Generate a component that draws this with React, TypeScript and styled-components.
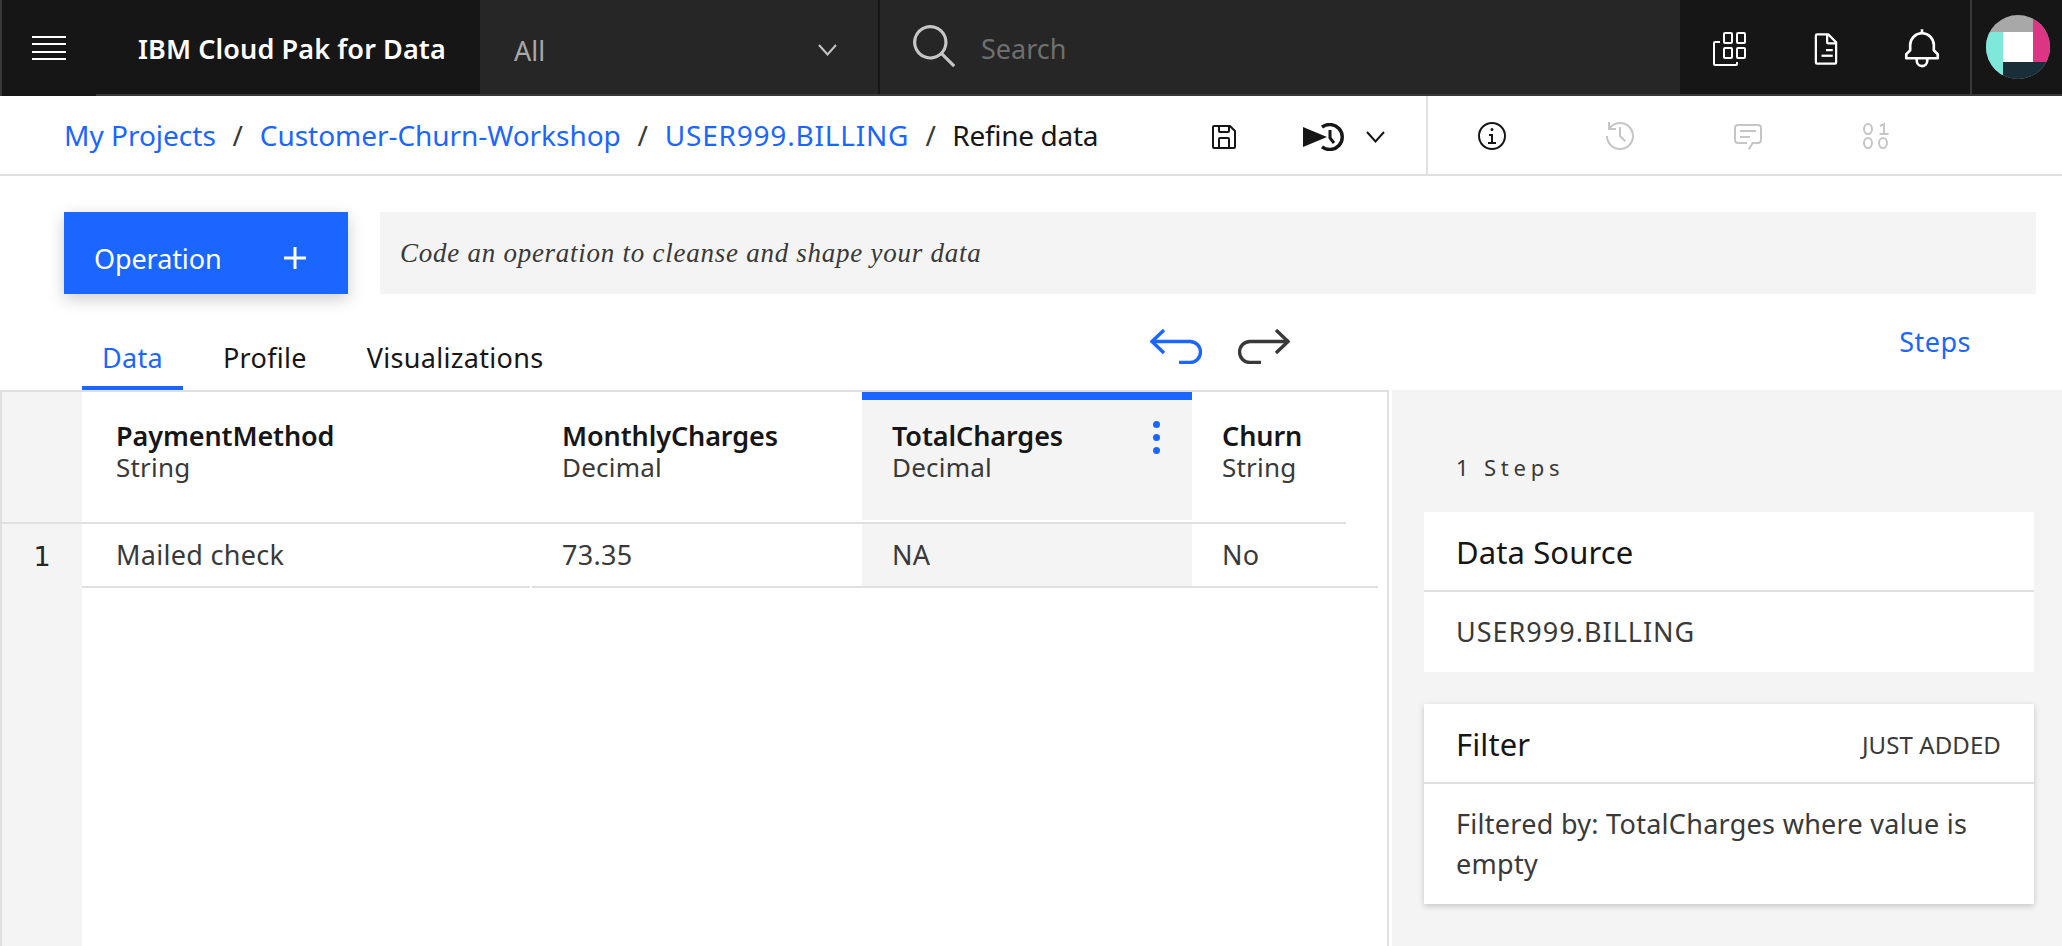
import React from "react";
import styled, { createGlobalStyle } from "styled-components";

const BLUE = "#1a66ff";
const LINE = "#e0e0e0";
const FONT = `"Noto Sans", "Liberation Sans", sans-serif`;

const GlobalStyle = createGlobalStyle`
  html, body {
    margin: 0;
    padding: 0;
    height: 100%;
    overflow: hidden;
    background: #fff;
    font-family: ${FONT};
  }
  * {
    box-sizing: border-box;
  }
  svg {
    display: block;
    flex: none;
  }
`;

const Page = styled.div`
  width: 2062px;
  height: 946px;
  display: flex;
  flex-direction: column;
  overflow: hidden;
`;

/* top dark header */
const Header = styled.header`
  height: 96px;
  display: flex;
  background: #161616;
  border-bottom: 2px solid #393939;
  border-left: 2px solid #393939;
  color: #fff;
`;

const MenuCell = styled.div`
  width: 94px;
  margin-bottom: -2px;
  background: #161616;
  display: flex;
  align-items: center;
  padding-left: 30px;
`;

const Brand = styled.div`
  width: 384px;
  display: flex;
  align-items: center;
  padding: 2px 0 0 42px;
  font-size: 27px;
  font-weight: 600;
  letter-spacing: 0.1px;
  white-space: nowrap;
`;

const Scope = styled.div`
  width: 400px;
  background: #262626;
  border-right: 2px solid #161616;
  display: flex;
  align-items: center;
  justify-content: space-between;
  padding: 6px 41px 0 34px;
  color: #a8a8a8;
  font-size: 27px;
`;

const SearchBox = styled.div`
  flex: 1;
  background: #262626;
  display: flex;
  align-items: center;
  gap: 21px;
  padding-left: 30px;
  color: #6f6f6f;
  font-size: 27px;
`;

const SearchLabel = styled.span`
  padding-top: 2px;
`;

const HeaderActions = styled.div`
  width: 382px;
  padding-left: 2px;
  display: flex;
`;

const HeaderIcon = styled.div`
  width: 96px;
  display: flex;
  align-items: center;
  justify-content: center;
  padding-top: 4px;
`;

const AvatarCell = styled.div`
  flex: 1;
  border-left: 2px solid #393939;
  display: flex;
  align-items: center;
  padding-left: 14px;
`;

/* breadcrumb bar */
const CrumbBar = styled.div`
  height: 80px;
  display: flex;
  border-bottom: 2px solid ${LINE};
  padding: 0 122px 0 64px;
`;

const Crumbs = styled.nav`
  flex: 1;
  display: flex;
  align-items: center;
  font-size: 28px;
  color: #161616;
`;

const CrumbLink = styled.a<{ $tracking?: number }>`
  color: ${BLUE};
  text-decoration: none;
  letter-spacing: ${(p) => p.$tracking ?? 0}px;
`;

const CrumbSlash = styled.span`
  width: ${(p: { $w: number }) => p.$w}px;
  text-align: center;
  color: #393939;
`;

const CrumbCurrent = styled.span`
  letter-spacing: -0.3px;
`;

const RunGroup = styled.div`
  display: flex;
  align-items: center;
  gap: 22px;
  padding: 4px 41px 0 0;
  border-right: 2px solid ${LINE};
`;

const SaveWrap = styled.div`
  margin-right: 41px;
`;

const ToolCell = styled.div`
  width: 128px;
  display: flex;
  align-items: center;
  justify-content: center;
  padding-top: 2px;
  color: ${(p: { $off?: boolean }) => (p.$off ? "#c6c6c6" : "#161616")};
`;

/* operation row */
const OpRow = styled.div`
  display: flex;
  gap: 32px;
  padding: 36px 26px 0 64px;
`;

const OpButton = styled.button`
  width: 284px;
  height: 82px;
  border: 0;
  background: ${BLUE};
  color: #fff;
  display: flex;
  align-items: center;
  justify-content: space-between;
  padding: 10px 42px 0 30px;
  font-family: inherit;
  font-size: 27px;
  letter-spacing: -0.1px;
  box-shadow: 0 5px 16px rgba(0, 0, 0, 0.2);
`;

const CodeInput = styled.div`
  flex: 1;
  height: 82px;
  background: #f4f4f4;
  display: flex;
  align-items: center;
  padding: 0 0 0 20px;
  font-family: "Liberation Serif", serif;
  font-style: italic;
  font-size: 27px;
  letter-spacing: 0.74px;
  color: #393939;
`;

/* tabs row */
const TabRow = styled.div`
  height: 96px;
  display: flex;
  padding-left: 82px;
`;

const TabList = styled.div`
  width: 1068px;
  display: flex;
  align-items: flex-end;
  gap: 20px;
`;

const Tab = styled.div<{ $active?: boolean }>`
  height: 62px;
  padding: 0 20px;
  display: flex;
  align-items: center;
  font-size: 27px;
  letter-spacing: 0.3px;
  color: ${(p) => (p.$active ? BLUE : "#161616")};
  border-bottom: 4px solid ${(p) => (p.$active ? BLUE : "transparent")};
`;

const History = styled.div`
  display: flex;
  gap: 36px;
  padding-top: 35px;
`;

const StepsLink = styled.a`
  margin-left: auto;
  margin-right: 91px;
  padding-top: 29px;
  color: ${BLUE};
  font-size: 27px;
  letter-spacing: 0.5px;
`;

/* main */
const Main = styled.div`
  flex: 1;
  display: flex;
  min-height: 0;
`;

const TablePanel = styled.div`
  width: 1389px;
  display: flex;
  border-top: 2px solid ${LINE};
  border-left: 2px solid ${LINE};
  border-right: 2px solid ${LINE};
`;

const Rail = styled.div`
  width: 80px;
  background: #f4f4f4;
`;

const RailHead = styled.div`
  height: 132px;
  border-bottom: 2px solid ${LINE};
`;

const RailCell = styled.div`
  height: 62px;
  display: flex;
  align-items: center;
  justify-content: center;
  padding-top: 2px;
  font-family: "DejaVu Sans", sans-serif;
  font-size: 27px;
  color: #262626;
`;

const Grid = styled.div`
  flex: 1;
`;

const HeadRow = styled.div`
  width: 1264px;
  height: 132px;
  display: flex;
  border-bottom: 2px solid ${LINE};
`;

const HeadCell = styled.div<{ $w: number; $selected?: boolean; $pad?: number }>`
  width: ${(p) => p.$w}px;
  height: 128px;
  display: flex;
  justify-content: space-between;
  padding: ${(p) => (p.$selected ? "20px 32px 0 30px" : `28px 0 0 ${p.$pad ?? 34}px`)};
  background: ${(p) => (p.$selected ? "#f4f4f4" : "transparent")};
  border-top: ${(p) => (p.$selected ? `8px solid ${BLUE}` : "0")};
`;

const ColName = styled.div`
  font-size: 27px;
  line-height: 32px;
  font-weight: 600;
  letter-spacing: -0.1px;
  color: #161616;
`;

const ColType = styled.div`
  font-size: 26px;
  line-height: 30px;
  letter-spacing: 0.2px;
  color: #393939;
`;

const Kebab = styled.div`
  display: flex;
  flex-direction: column;
  gap: 6px;
  padding-top: 1px;
`;

const KebabDot = styled.span`
  width: 7px;
  height: 7px;
  border-radius: 50%;
  background: ${BLUE};
`;

const BodyRow = styled.div`
  display: flex;
  width: 1296px;
`;

const BodyCell = styled.div<{ $w: number; $selected?: boolean; $pad?: number }>`
  width: ${(p) => p.$w}px;
  height: 64px;
  display: flex;
  align-items: center;
  padding: 0 0 2px ${(p) => p.$pad ?? 34}px;
  font-size: 27px;
  letter-spacing: 0.3px;
  color: #393939;
  border-bottom: 2px solid ${LINE};
  background: ${(p) => (p.$selected ? "#f4f4f4" : "transparent")};
`;

const CellGap = styled.div`
  width: 2px;
`;

/* steps panel */
const SidePanel = styled.aside`
  flex: 1;
  margin-left: 3px;
  background: #f4f4f4;
  padding: 63px 28px 0 32px;
`;

const StepCount = styled.div`
  font-size: 22px;
  line-height: 28px;
  letter-spacing: 4.8px;
  color: #393939;
  padding-left: 32px;
  margin-bottom: 31px;
`;

const StepCard = styled.section<{ $raised?: boolean }>`
  background: #fff;
  margin-bottom: 32px;
  box-shadow: ${(p) => (p.$raised ? "0 2px 6px rgba(0, 0, 0, 0.2)" : "none")};
`;

const StepHead = styled.div`
  height: 80px;
  display: flex;
  align-items: center;
  justify-content: space-between;
  padding: 2px 33px 0 32px;
  border-bottom: 2px solid ${LINE};
  font-size: 31px;
  letter-spacing: 0.1px;
  color: #161616;
`;

const StepTag = styled.span`
  font-size: 24px;
  letter-spacing: 0.1px;
  color: #393939;
`;

const StepBody = styled.div<{ $tracking?: number }>`
  padding: 20px 32px 20px;
  font-size: 27px;
  line-height: 40px;
  letter-spacing: ${(p) => p.$tracking ?? 0.28}px;
  color: #393939;
`;

const Chevron = ({ w = 19, color = "#161616" }: { w?: number; color?: string }) => (
  <svg width={w} height={12} viewBox="0 0 19 12" fill="none">
    <path d="M1 1l8.5 9.5L18 1" stroke={color} strokeWidth="2" />
  </svg>
);

const MenuIcon = () => (
  <svg width="34" height="24" viewBox="0 0 34 24" fill="#fff">
    <rect y="0" width="34" height="2" />
    <rect y="7" width="34" height="2" />
    <rect y="15" width="34" height="2" />
    <rect y="22" width="34" height="2" />
  </svg>
);

const SearchIcon = () => (
  <svg width="50" height="50" viewBox="0 0 32 32" fill="#c6c6c6">
    <path d="M29,27.5859l-7.5521-7.5521a11.0177,11.0177,0,1,0-1.4141,1.4141L27.5859,29ZM4,13a9,9,0,1,1,9,9A9.01,9.01,0,0,1,4,13Z" />
  </svg>
);

const AppsIcon = () => (
  <svg width="34" height="34" viewBox="0 0 34 34" fill="none" stroke="#fff" strokeWidth="2">
    <rect x="11" y="1" width="8" height="10" rx="1" />
    <rect x="24" y="1" width="8" height="10" rx="1" />
    <rect x="11" y="16" width="8" height="10" rx="1" />
    <rect x="24" y="16" width="8" height="10" rx="1" />
    <path d="M7 10H2a1 1 0 0 0-1 1v21a1 1 0 0 0 1 1h21a1 1 0 0 0 1-1v-2" />
  </svg>
);

const DocIcon = () => (
  <svg width="36" height="36" viewBox="0 0 32 32" fill="#fff">
    <path d="M25.7,9.3l-7-7A.9.9,0,0,0,18,2H8A2,2,0,0,0,6,4V28a2,2,0,0,0,2,2H24a2,2,0,0,0,2-2V10A.9.9,0,0,0,25.7,9.3ZM18,4.4,23.6,10H18ZM24,28H8V4h8v6a2,2,0,0,0,2,2h6Z" />
    <rect x="16" y="16" width="6" height="2" />
    <rect x="12" y="21" width="10" height="2" />
  </svg>
);

const BellIcon = () => (
  <svg width="42" height="42" viewBox="0 0 32 32" fill="#fff">
    <path d="M28.7071,19.293,26,16.5859V13a10.0136,10.0136,0,0,0-9-9.9492V1H15V3.0508A10.0136,10.0136,0,0,0,6,13v3.5859L3.2929,19.293A1,1,0,0,0,3,20v3a1,1,0,0,0,1,1h7v.7768a5.152,5.152,0,0,0,4.5,5.1987A5.0057,5.0057,0,0,0,21,25V24h7a1,1,0,0,0,1-1V20A1,1,0,0,0,28.7071,19.293ZM19,25a3,3,0,0,1-6,0V24h6Zm8-3H5V20.4141L7.707,17.707A1,1,0,0,0,8,17V13a8,8,0,0,1,16,0v4a1,1,0,0,0,.293.707L27,20.4141Z" />
  </svg>
);

const Avatar = () => (
  <svg width="64" height="64" viewBox="0 0 64 64">
    <clipPath id="avatar-clip">
      <circle cx="32" cy="32" r="32" />
    </clipPath>
    <g clipPath="url(#avatar-clip)">
      <rect width="64" height="64" fill="#a8a8a8" />
      <rect x="47" width="17" height="47" fill="#dc3585" />
      <rect y="17" width="17" height="47" fill="#7ee8da" />
      <rect x="17" y="47" width="47" height="17" fill="#1a2e3a" />
      <rect x="17" y="17" width="30" height="30" fill="#fff" />
    </g>
  </svg>
);

const SaveIcon = () => (
  <svg width="32" height="32" viewBox="0 0 32 32" fill="#161616">
    <path d="M27.71,9.29l-5-5A1,1,0,0,0,22,4H6A2,2,0,0,0,4,6V26a2,2,0,0,0,2,2H26a2,2,0,0,0,2-2V10A1,1,0,0,0,27.71,9.29ZM12,6h8v4H12Zm8,20H12V18h8Zm2,0V18a2,2,0,0,0-2-2H12a2,2,0,0,0-2,2v8H6V6h4v4a2,2,0,0,0,2,2h8a2,2,0,0,0,2-2V6.41l4,4V26Z" />
  </svg>
);

const RunIcon = () => (
  <svg width="41" height="28" viewBox="0 0 41 28" fill="none">
    <path d="M19 4.2A12.500 12.500 0 1 1 19 23.800" stroke="#161616" strokeWidth="3.400" />
    <path d="M27 7v8l4 5" stroke="#161616" strokeWidth="3" />
    <path d="M0 4l24 10L0 24z" fill="#161616" />
  </svg>
);

const InfoIcon = () => (
  <svg width="32" height="32" viewBox="0 0 32 32" fill="currentColor">
    <path d="M17 22v-8h-4v2h2v6h-3v2h8v-2h-3zM16 8a1.5 1.5 0 1 0 1.5 1.5A1.5 1.5 0 0 0 16 8z" />
    <path d="M16 30a14 14 0 1 1 14-14 14 14 0 0 1-14 14zm0-26a12 12 0 1 0 12 12A12 12 0 0 0 16 4z" />
  </svg>
);

const RecentIcon = () => (
  <svg width="32" height="32" viewBox="0 0 32 32" fill="currentColor">
    <path d="M20.59 22L15 16.41V7h2v8.58l5 5.01L20.59 22z" />
    <path d="M16 2A13.94 13.94 0 0 0 6 6.23V2H4v8h8V8H7.08A12 12 0 1 1 4 16H2A14 14 0 1 0 16 2z" />
  </svg>
);

const CommentIcon = () => (
  <svg width="32" height="32" viewBox="0 0 32 32" fill="currentColor">
    <path d="M17.74,30,16,29l4-7h6a2,2,0,0,0,2-2V8a2,2,0,0,0-2-2H6A2,2,0,0,0,4,8V20a2,2,0,0,0,2,2h9v2H6a4,4,0,0,1-4-4V8A4,4,0,0,1,6,4H26a4,4,0,0,1,4,4V20a4,4,0,0,1-4,4H21.16Z" />
    <rect x="8" y="10" width="16" height="2" />
    <rect x="8" y="16" width="10" height="2" />
  </svg>
);

const BinaryIcon = () => (
  <svg width="32" height="32" viewBox="0 0 32 32" fill="none" stroke="currentColor" strokeWidth="2">
    <ellipse cx="8" cy="9" rx="4" ry="5" />
    <ellipse cx="8" cy="23" rx="4" ry="5" />
    <ellipse cx="23" cy="23" rx="4" ry="5" />
    <path d="M20 6l4-2v10M19.500 14h9" />
  </svg>
);

const PlusIcon = () => (
  <svg width="22" height="22" viewBox="0 0 22 22" fill="#fff">
    <rect x="9.500" width="3" height="22" />
    <rect y="9.500" width="22" height="3" />
  </svg>
);

const UndoIcon = () => (
  <svg width="52" height="35" viewBox="0 0 52 35" fill="none" stroke={BLUE} strokeWidth="3.400">
    <path d="M14 1L2 12.500 14 24" />
    <path d="M2 12.500h38a10.500 10.500 0 0 1 0 21H29" />
  </svg>
);

const RedoIcon = () => (
  <svg width="52" height="35" viewBox="0 0 52 35" fill="none" stroke="#393939" strokeWidth="3.400">
    <path d="M38 1l12 11.500L38 24" />
    <path d="M50 12.500H12a10.500 10.500 0 0 0 0 21h11" />
  </svg>
);

const App = () => (
  <Page>
    <GlobalStyle />
    <Header>
      <MenuCell>
        <MenuIcon />
      </MenuCell>
      <Brand>IBM Cloud Pak for Data</Brand>
      <Scope>
        All
        <Chevron color="#c6c6c6" />
      </Scope>
      <SearchBox>
        <SearchIcon />
        <SearchLabel>Search</SearchLabel>
      </SearchBox>
      <HeaderActions>
        <HeaderIcon>
          <AppsIcon />
        </HeaderIcon>
        <HeaderIcon>
          <DocIcon />
        </HeaderIcon>
        <HeaderIcon>
          <BellIcon />
        </HeaderIcon>
        <AvatarCell>
          <Avatar />
        </AvatarCell>
      </HeaderActions>
    </Header>

    <CrumbBar>
      <Crumbs>
        <CrumbLink>My Projects</CrumbLink>
        <CrumbSlash $w={44}>/</CrumbSlash>
        <CrumbLink $tracking={-0.05}>Customer-Churn-Workshop</CrumbLink>
        <CrumbSlash $w={44}>/</CrumbSlash>
        <CrumbLink $tracking={0.8}>USER999.BILLING</CrumbLink>
        <CrumbSlash $w={43}>/</CrumbSlash>
        <CrumbCurrent>Refine data</CrumbCurrent>
      </Crumbs>
      <RunGroup>
        <SaveWrap>
          <SaveIcon />
        </SaveWrap>
        <RunIcon />
        <Chevron />
      </RunGroup>
      <ToolCell>
        <InfoIcon />
      </ToolCell>
      <ToolCell $off>
        <RecentIcon />
      </ToolCell>
      <ToolCell $off>
        <CommentIcon />
      </ToolCell>
      <ToolCell $off>
        <BinaryIcon />
      </ToolCell>
    </CrumbBar>

    <OpRow>
      <OpButton>
        Operation
        <PlusIcon />
      </OpButton>
      <CodeInput>Code an operation to cleanse and shape your data</CodeInput>
    </OpRow>

    <TabRow>
      <TabList>
        <Tab $active>Data</Tab>
        <Tab>Profile</Tab>
        <Tab>Visualizations</Tab>
      </TabList>
      <History>
        <UndoIcon />
        <RedoIcon />
      </History>
      <StepsLink>Steps</StepsLink>
    </TabRow>

    <Main>
      <TablePanel>
        <Rail>
          <RailHead />
          <RailCell>1</RailCell>
        </Rail>
        <Grid>
          <HeadRow>
            <HeadCell $w={450}>
              <div>
                <ColName>PaymentMethod</ColName>
                <ColType>String</ColType>
              </div>
            </HeadCell>
            <HeadCell $w={330} $pad={30}>
              <div>
                <ColName>MonthlyCharges</ColName>
                <ColType>Decimal</ColType>
              </div>
            </HeadCell>
            <HeadCell $w={330} $selected>
              <div>
                <ColName>TotalCharges</ColName>
                <ColType>Decimal</ColType>
              </div>
              <Kebab>
                <KebabDot />
                <KebabDot />
                <KebabDot />
              </Kebab>
            </HeadCell>
            <HeadCell $w={154} $pad={30}>
              <div>
                <ColName>Churn</ColName>
                <ColType>String</ColType>
              </div>
            </HeadCell>
          </HeadRow>
          <BodyRow>
            <BodyCell $w={448}>Mailed check</BodyCell>
            <CellGap />
            <BodyCell $w={330} $pad={30}>
              73.35
            </BodyCell>
            <BodyCell $w={330} $selected $pad={30}>
              NA
            </BodyCell>
            <BodyCell $w={186} $pad={30}>
              No
            </BodyCell>
          </BodyRow>
        </Grid>
      </TablePanel>

      <SidePanel>
        <StepCount>1 Steps</StepCount>
        <StepCard>
          <StepHead>Data Source</StepHead>
          <StepBody $tracking={1}>USER999.BILLING</StepBody>
        </StepCard>
        <StepCard $raised>
          <StepHead>
            Filter
            <StepTag>JUST ADDED</StepTag>
          </StepHead>
          <StepBody>Filtered by: TotalCharges where value is empty</StepBody>
        </StepCard>
      </SidePanel>
    </Main>
  </Page>
);

export default App;
